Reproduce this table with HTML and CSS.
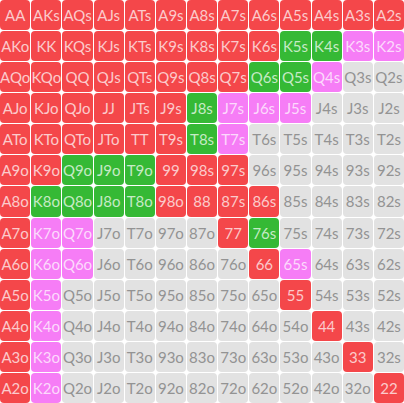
FILE: index.html
```html
<!DOCTYPE html>
<html lang="en">
<head>
    <meta charset="UTF-8">
    <meta name="viewport" content="width=device-width, initial-scale=1.0">
    <title>Hand Range</title>
    <link rel="stylesheet" href="styles.css">
</head>
<body>
    <div class="range-grid" id="grid"></div>

    <script>
        const ranks = ['A', 'K', 'Q', 'J', 'T', '9', '8', '7', '6', '5', '4', '3', '2'];

        // r = raise, c = call, m = mixed, empty = fold
        const range = [
            'rrrrrrrrrrrrr',
            'rrrrrrrrrccmm',
            'rrrrrrrrccm..',
            'rrrrrrcmmm...',
            'rrrrrrcm.....',
            'rrcccrrr.....',
            'rccccrrrr....',
            'rmm....rc....',
            'rmm.....rm...',
            'rm.......r...',
            'rm........r..',
            'rm.........r.',
            'rm..........r'
        ];

        const classes = { r: 'raise', c: 'call', m: 'mixed', '.': 'fold' };
        const grid = document.getElementById('grid');

        for (let i = 0; i < 13; i++) {
            for (let j = 0; j < 13; j++) {
                let hand;
                if (i === j) hand = ranks[i] + ranks[j];
                else if (j > i) hand = ranks[i] + ranks[j] + 's';
                else hand = ranks[j] + ranks[i] + 'o';

                const cell = document.createElement('div');
                cell.className = 'cell ' + classes[range[i][j]];
                cell.textContent = hand;
                grid.appendChild(cell);
            }
        }
    </script>
</body>
</html>
```

FILE: styles.css
```css
* {
    margin: 0;
    padding: 0;
    box-sizing: border-box;
}

body {
    background: #fff;
    font-family: 'Lato', 'Open Sans', sans-serif;
}

.range-grid {
    width: 404px;
    height: 403px;
    display: grid;
    grid-template-columns: repeat(13, 1fr);
    grid-template-rows: repeat(13, 1fr);
    gap: 1px;
}

.cell {
    display: flex;
    align-items: center;
    justify-content: center;
    border-radius: 4px;
    font-size: 15px;
    color: rgba(255, 255, 255, 0.72);
}

.raise {
    background: #f4474a;
}

.call {
    background: #35b935;
}

.mixed {
    background: #f67df6;
}

.fold {
    background: #e2e2e2;
    color: #939393;
}
```
